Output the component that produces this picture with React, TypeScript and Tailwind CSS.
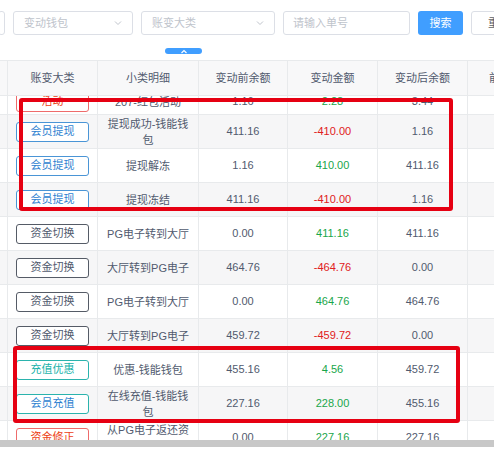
import React from "react";

type Tag = { text: string; border: string; color: string };
type Row = {
  tag: Tag;
  detail: string;
  before: string;
  amount: string;
  positive: boolean;
  after: string;
  stripe: boolean;
  shift?: boolean;
};

const T = {
  red: { border: "border-[#ee6b6b]", color: "text-[#ed4014]" },
  blue: { border: "border-[#4a95d6]", color: "text-[#2d7fd0]" },
  gray: { border: "border-[#555b66]", color: "text-[#515a6e]" },
  teal: { border: "border-[#2bb3ad]", color: "text-[#20b2aa]" },
  tealBlue: { border: "border-[#2bb3ad]", color: "text-[#2d7fd0]" },
};

const mk = (text: string, k: keyof typeof T): Tag => ({ text, ...T[k] });

const rows: Row[] = [
  { tag: mk("活动", "red"), detail: "207-红包活动", before: "1.16", amount: "2.28", positive: true, after: "3.44", stripe: false, shift: true },
  { tag: mk("会员提现", "blue"), detail: "提现成功-钱能钱包", before: "411.16", amount: "-410.00", positive: false, after: "1.16", stripe: true },
  { tag: mk("会员提现", "blue"), detail: "提现解冻", before: "1.16", amount: "410.00", positive: true, after: "411.16", stripe: false },
  { tag: mk("会员提现", "blue"), detail: "提现冻结", before: "411.16", amount: "-410.00", positive: false, after: "1.16", stripe: true },
  { tag: mk("资金切换", "gray"), detail: "PG电子转到大厅", before: "0.00", amount: "411.16", positive: true, after: "411.16", stripe: false },
  { tag: mk("资金切换", "gray"), detail: "大厅转到PG电子", before: "464.76", amount: "-464.76", positive: false, after: "0.00", stripe: true },
  { tag: mk("资金切换", "gray"), detail: "PG电子转到大厅", before: "0.00", amount: "464.76", positive: true, after: "464.76", stripe: false },
  { tag: mk("资金切换", "gray"), detail: "大厅转到PG电子", before: "459.72", amount: "-459.72", positive: false, after: "0.00", stripe: true },
  { tag: mk("充值优惠", "teal"), detail: "优惠-钱能钱包", before: "455.16", amount: "4.56", positive: true, after: "459.72", stripe: false },
  { tag: mk("会员充值", "tealBlue"), detail: "在线充值-钱能钱包", before: "227.16", amount: "228.00", positive: true, after: "455.16", stripe: true },
  { tag: mk("资金修正", "red"), detail: "从PG电子返还资金", before: "0.00", amount: "227.16", positive: true, after: "227.16", stripe: false },
];

const font = {
  fontFamily: '"Liberation Sans", Arial, "Noto Sans CJK SC", sans-serif',
};

function Chevron() {
  return (
    <svg width="10" height="10" viewBox="0 0 10 10" className="shrink-0">
      <path d="M2 3.5 L5 6.5 L8 3.5" fill="none" stroke="#c0c4cc" strokeWidth="1" />
    </svg>
  );
}

function Select({ w, text }: { w: string; text: string }) {
  return (
    <div className={`${w} h-[24px] shrink-0 border border-[#dcdfe6] rounded-[3px] flex items-center justify-between pl-[10px] pr-[9px]`}>
      <span className="text-[#c0c4cc] text-[11px]">{text}</span>
      <Chevron />
    </div>
  );
}

const cell = "border-r border-[#e8eaec] flex items-center justify-center shrink-0";

export default function App() {
  return (
    <div className="w-[494px] h-[467px] bg-white overflow-hidden relative" style={font}>
      {/* filter bar */}
      <div className="flex items-center gap-[8px] pt-[11px] h-[35px] -ml-[2px]">
        <div className="w-[7px] h-[24px] shrink-0 border border-[#dcdfe6] rounded-[3px]" />
        <Select w="w-[120px]" text="变动钱包" />
        <Select w="w-[134px]" text="账变大类" />
        <div className="w-[127px] h-[24px] shrink-0 border border-[#dcdfe6] rounded-[3px] flex items-center pl-[9px]">
          <span className="text-[#c0c4cc] text-[11px]">请输入单号</span>
        </div>
        <div className="w-[45px] h-[24px] shrink-0 bg-[#409eff] rounded-[3px] flex items-center justify-center text-white text-[11px]">
          搜索
        </div>
        <div className="w-[50px] h-[24px] shrink-0 border border-[#dcdfe6] rounded-[3px] flex items-center pl-[16px] text-[#606266] text-[11px]">
          重置
        </div>
      </div>
      {/* toggle pill */}
      <div className="flex h-[25px] items-start pt-[13px] pl-[165px]">
        <div className="w-[37px] h-[6px] rounded-full bg-[#409eff] flex items-center justify-center">
          <svg width="8" height="5" viewBox="0 0 8 5">
            <path d="M1.5 4 L4 1.5 L6.5 4" fill="none" stroke="white" strokeWidth="1.2" />
          </svg>
        </div>
      </div>
      {/* table */}
      <div className="border-t border-[#e8eaec] w-[560px]">
        <div className="flex h-[35px] bg-[#f8f8f9] border-b border-[#e8eaec] text-[11px] text-[#515a6e]">
          <div className={`${cell} w-[8px]`} />
          <div className={`${cell} w-[90px]`}>账变大类</div>
          <div className={`${cell} w-[101px]`}>小类明细</div>
          <div className={`${cell} w-[89px]`}>变动前余额</div>
          <div className={`${cell} w-[90px]`}>变动金额</div>
          <div className={`${cell} w-[90px]`}>变动后余额</div>
          <div className={`${cell} w-[60px] justify-start pl-[21px]`}>前余额</div>
        </div>
        <div className="h-[344px] overflow-hidden">
          <div className="-mt-[15px]">
            {rows.map((r, i) => (
              <div
                key={i}
                className={`flex h-[34px] border-b border-[#e8eaec] text-[11px] text-[#515a6e] ${r.shift ? "pt-[8px]" : ""} ${r.stripe ? "bg-[#f6f6f7]" : "bg-white"}`}
              >
                <div className={`${cell} w-[8px]`} />
                <div className={`${cell} w-[90px]`}>
                  <div className={`w-[73px] h-[20px] border ${r.tag.border} ${r.tag.color} rounded-[3px] flex items-center justify-center bg-white text-[11px]`}>
                    {r.tag.text}
                  </div>
                </div>
                <div className={`${cell} w-[101px] px-[6px] text-center leading-[16px]`}>{r.detail}</div>
                <div className={`${cell} w-[89px]`}>{r.before}</div>
                <div className={`${cell} w-[90px] ${r.positive ? "text-[#19a64a]" : "text-[#e02020]"}`}>{r.amount}</div>
                <div className={`${cell} w-[90px]`}>{r.after}</div>
                <div className={`${cell} w-[60px]`} />
              </div>
            ))}
          </div>
        </div>
        <div className="h-[7px] bg-[#c8c8c8] w-[494px]" />
      </div>
      {/* red annotation boxes */}
      <div className="absolute left-[19px] top-[98px] w-[434px] h-[113px] border-[4px] border-[#e60012] rounded-[3px]" />
      <div className="absolute left-[13px] top-[346px] w-[447px] h-[77px] border-[4px] border-[#e60012] rounded-[3px]" />
    </div>
  );
}
